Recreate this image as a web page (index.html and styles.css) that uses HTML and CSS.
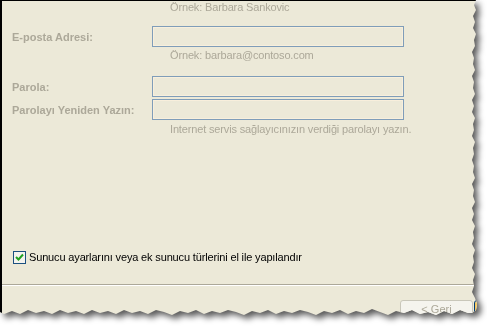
FILE: index.html
```html
<!DOCTYPE html>
<html lang="tr">
<head>
    <meta charset="UTF-8">
    <meta name="viewport" content="width=device-width, initial-scale=1.0">
    <title>Hesap Ekle</title>
    <link rel="stylesheet" href="styles.css">
</head>
<body>

<div class="sheet">
    <div class="dialog">
        <div class="hint">Örnek: Barbara Sankovic</div>

        <div class="row first">
            <label for="email">E-posta Adresi:</label>
            <input type="text" id="email" disabled>
        </div>
        <div class="hint tight">Örnek: barbara@contoso.com</div>

        <div class="row spaced">
            <label for="password">Parola:</label>
            <input type="password" id="password" disabled>
        </div>
        <div class="row close">
            <label for="password2">Parolayı Yeniden Yazın:</label>
            <input type="password" id="password2" disabled>
        </div>
        <div class="hint note">Internet servis sağlayıcınızın verdiği parolayı yazın.</div>

        <div class="check">
            <span class="box">
                <svg width="9" height="9" viewBox="0 0 9 9">
                    <path d="M1 4 L3.5 6.5 L8 1.5" fill="none" stroke="#21A121" stroke-width="2"/>
                </svg>
            </span>
            <span>Sunucu ayarlarını veya ek sunucu türlerini el ile yapılandır</span>
        </div>

        <div class="separator"></div>

        <div class="buttons">
            <button class="btn" disabled>&lt; Geri</button>
            <span class="btn default"></span>
        </div>
    </div>
</div>

</body>
</html>
```

FILE: styles.css
```css
body {
    margin: 0;
    background-color: #fff;
    font-family: "Liberation Sans", Arial, sans-serif;
    font-size: 11px;
    letter-spacing: -0.15px;
    overflow: hidden;
}

.sheet {
    width: 487px;
    height: 327px;
    filter: drop-shadow(4px 4px 3px rgba(0, 0, 0, 0.65));
}

.dialog {
    width: 487px;
    height: 326px;
    box-sizing: border-box;
    overflow: hidden;
    background-color: #ece9d8;
    border-top: 1px solid #000;
    border-left: 2px solid #000;
    padding-left: 10px;
    clip-path: polygon(0 0, 476px 0, 474px 5px, 476px 10px, 473px 16px, 475px 22px, 473px 28px, 476px 34px, 474px 40px, 475px 46px, 472px 52px, 474px 58px, 473px 64px, 475px 70px, 472px 76px, 474px 82px, 473px 88px, 475px 94px, 472px 100px, 474px 106px, 472px 112px, 475px 118px, 473px 124px, 474px 130px, 472px 136px, 475px 142px, 473px 148px, 474px 154px, 472px 160px, 474px 166px, 473px 172px, 475px 178px, 472px 184px, 474px 190px, 473px 196px, 475px 202px, 472px 208px, 474px 214px, 472px 220px, 475px 226px, 473px 232px, 474px 238px, 472px 244px, 475px 250px, 473px 256px, 474px 262px, 472px 268px, 475px 274px, 473px 280px, 474px 286px, 472px 292px, 475px 298px, 477px 304px, 476px 310px, 472px 313px, 468px 313px, 460px 310px, 452px 314px, 444px 311px, 436px 315px, 428px 312px, 420px 314px, 412px 310px, 404px 313px, 396px 311px, 388px 315px, 380px 312px, 372px 309px, 364px 313px, 356px 311px, 348px 314px, 340px 310px, 332px 313px, 324px 311px, 316px 315px, 308px 312px, 300px 310px, 292px 313px, 284px 311px, 276px 314px, 268px 310px, 260px 313px, 252px 311px, 244px 315px, 236px 312px, 228px 310px, 220px 313px, 212px 311px, 204px 314px, 196px 310px, 188px 313px, 180px 311px, 172px 315px, 164px 312px, 156px 310px, 148px 314px, 140px 311px, 132px 313px, 124px 310px, 116px 314px, 108px 311px, 100px 313px, 92px 310px, 84px 314px, 76px 311px, 68px 313px, 60px 310px, 52px 314px, 44px 311px, 36px 313px, 28px 310px, 20px 314px, 12px 311px, 4px 314px, 0 312px);
}

.hint {
    margin-left: 158px;
    line-height: 13px;
    color: #aca899;
}

.hint.tight {
    margin-top: 2px;
}

.hint.note {
    margin-top: 3px;
}

.row {
    display: grid;
    grid-template-columns: 140px 252px;
    align-items: center;
}

.row.first {
    margin-top: 12px;
}

.row.spaced {
    margin-top: 14px;
}

.row.close {
    margin-top: 2px;
}

label {
    font-weight: bold;
    color: #aca899;
    letter-spacing: 0;
}

input {
    box-sizing: border-box;
    width: 252px;
    height: 21px;
    margin: 0;
    padding: 0;
    border: 1px solid #7f9db9;
    background-color: #ece9d8;
    box-shadow: inset 0 0 0 1px #f8efdc;
}

.check {
    display: flex;
    align-items: center;
    gap: 3px;
    margin-top: 114px;
    margin-left: 1px;
    line-height: 15px;
    color: #000;
}

.box {
    display: flex;
    justify-content: center;
    align-items: center;
    box-sizing: border-box;
    width: 13px;
    height: 13px;
    border: 1px solid #1c5180;
    background-color: #f4f3ee;
}

.separator {
    margin: 19px 0 0 -10px;
    height: 0;
    border-top: 1px solid #aca899;
    border-bottom: 1px solid #fff;
}

.buttons {
    display: flex;
    gap: 1px;
    margin: 14px 0 0 388px;
}

.btn {
    flex: none;
    box-sizing: border-box;
    width: 73px;
    height: 23px;
    padding: 0 0 5px;
    font-family: inherit;
    font-size: 11px;
    letter-spacing: 0;
    background-color: #f5f4ee;
    border: 1px solid #c9c7ba;
    border-radius: 3px;
    color: #aca899;
}

.btn.default {
    width: 20px;
    border-color: #003c74;
    box-shadow: inset 0 0 0 2px #f6c65b;
}
```
